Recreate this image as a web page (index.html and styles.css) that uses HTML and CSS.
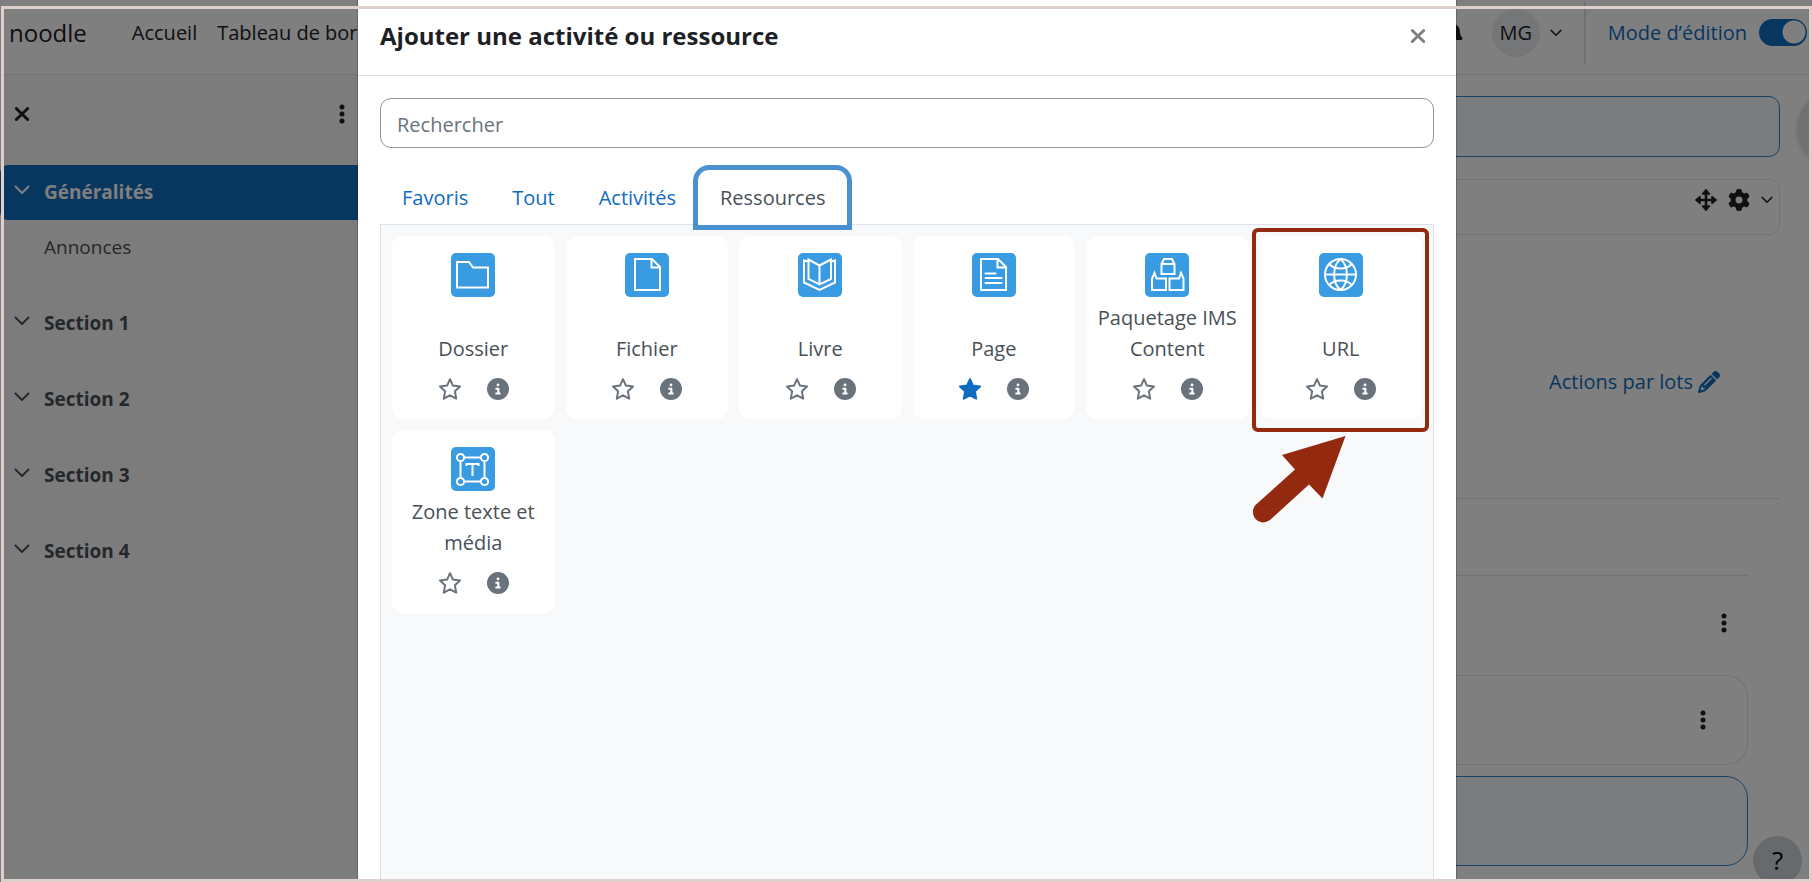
FILE: index.html
```html
<!DOCTYPE html>
<html lang="fr">
<head>
<meta charset="utf-8">
<meta name="viewport" content="width=device-width, initial-scale=1">
<title>noodle – Ajouter une activité ou ressource</title>
<link rel="stylesheet" href="styles.css">
</head>
<body>
<svg class="sprite" aria-hidden="true">
  <symbol id="i-chevron" viewBox="0 0 16 16"><path d="M1.5 4.5 8 11l6.500-6.500" fill="none" stroke="currentColor" stroke-width="2" stroke-linecap="round" stroke-linejoin="round"/></symbol>
  <symbol id="i-close" viewBox="0 0 16 16"><path d="M2.300 2.500 13.700 13.500M13.700 2.500 2.300 13.500" fill="none" stroke="currentColor" stroke-width="3" stroke-linecap="round"/></symbol>
  <symbol id="i-dots" viewBox="0 0 6 20"><circle cx="3" cy="3" r="2.500"/><circle cx="3" cy="10" r="2.500"/><circle cx="3" cy="17" r="2.500"/></symbol>
  <symbol id="i-star" viewBox="0 0 24 24"><path d="M12 2.200 14.900 8.600 22 9.500 16.900 14.300 18.200 21.700 12 18.300 5.800 21.700 7.100 14.300 2 9.500 9.100 8.600Z" stroke="currentColor" stroke-width="2" stroke-linejoin="round"/></symbol>
  <symbol id="i-info" viewBox="0 0 512 512"><path d="M256 512A256 256 0 1 0 256 0a256 256 0 1 0 0 512zM216 336l24 0 0-64-24 0c-13.300 0-24-10.700-24-24s10.700-24 24-24l48 0c13.300 0 24 10.700 24 24l0 88 8 0c13.300 0 24 10.700 24 24s-10.700 24-24 24l-80 0c-13.300 0-24-10.700-24-24s10.700-24 24-24zm40-208a32 32 0 1 1 0 64 32 32 0 1 1 0-64z"/></symbol>
</svg>

<div class="page">
  <header class="navbar">
    <a class="brand" href="#">noodle</a>
    <nav class="primary-nav" aria-label="Navigation principale">
      <a href="#">Accueil</a>
      <a href="#">Tableau de bord</a>
    </nav>
    <div class="user-tools">
      <button class="plain" type="button" aria-label="Notifications">
        <svg class="ico-22" viewBox="0 0 448 512" fill="currentColor"><path d="M224 0c-17.700 0-32 14.300-32 32v19C119 66 64 131 64 208v19c0 47-17 92-48 127l-8 9c-8 9-10 23-5 34s16 19 29 19h384c13 0 24-7 29-19s3-25-5-34l-8-9c-31-35-48-80-48-127v-19c0-77-55-142-128-157V32c0-17.700-14.300-32-32-32zm45 493c12-12 19-28 19-45H160c0 17 7 33 19 45s28 19 45 19 33-7 45-19z"/></svg>
      </button>
      <button class="plain user-menu" type="button">
        <span class="avatar">MG</span>
        <svg class="ico-12"><use href="#i-chevron"/></svg>
      </button>
      <label class="edit-mode" for="edit-switch">Mode d’édition
        <input class="switch" id="edit-switch" type="checkbox" role="switch" checked>
      </label>
    </div>
  </header>

  <div class="columns">
    <aside class="drawer" aria-label="Index du cours">
      <div class="drawer-head">
        <button class="plain" type="button" aria-label="Fermer l’index"><svg class="ico-16"><use href="#i-close"/></svg></button>
        <button class="plain" type="button" aria-label="Options"><svg class="ico-dots"><use href="#i-dots"/></svg></button>
      </div>
      <div class="section">
        <a class="row row-active" href="#"><svg class="ico-16"><use href="#i-chevron"/></svg>Généralités</a>
        <a class="row row-child" href="#">Annonces</a>
      </div>
      <div class="section"><a class="row" href="#"><svg class="ico-16"><use href="#i-chevron"/></svg>Section 1</a></div>
      <div class="section"><a class="row" href="#"><svg class="ico-16"><use href="#i-chevron"/></svg>Section 2</a></div>
      <div class="section"><a class="row" href="#"><svg class="ico-16"><use href="#i-chevron"/></svg>Section 3</a></div>
      <div class="section"><a class="row" href="#"><svg class="ico-16"><use href="#i-chevron"/></svg>Section 4</a></div>
    </aside>

    <main class="content">
      <div class="add-block"></div>
      <div class="block">
        <button class="plain" type="button" aria-label="Déplacer">
          <svg class="ico-22" viewBox="0 0 22 22"><path d="M11 3v16M3 11h16" stroke="currentColor" stroke-width="2.600"/><path d="M11 .8 14.500 5h-7ZM11 21.200 7.500 17h7ZM.8 11 5 7.500v7ZM21.200 11 17 14.500v-7Z" stroke="currentColor" stroke-width="1.500" stroke-linejoin="round"/></svg>
        </button>
        <button class="plain block-menu" type="button" aria-label="Réglages">
          <svg class="ico-22" viewBox="0 0 512 512" fill="currentColor"><path d="M495.900 166.600c3.200 8.700 .5 18.400-6.400 24.600l-43.300 39.400c1.100 8.300 1.700 16.800 1.700 25.400s-.6 17.100-1.700 25.400l43.300 39.400c6.900 6.200 9.600 15.900 6.400 24.600c-4.400 11.900-9.700 23.300-15.800 34.300l-4.700 8.100c-6.600 11-14 21.400-22.100 31.200c-5.900 7.200-15.700 9.600-24.500 6.800l-55.700-17.700c-13.400 10.300-28.200 18.900-44 25.400l-12.500 57.100c-2 9.100-9 16.300-18.200 17.800c-13.800 2.300-28 3.500-42.500 3.500s-28.700-1.200-42.500-3.500c-9.200-1.500-16.200-8.700-18.200-17.800l-12.500-57.100c-15.800-6.500-30.600-15.100-44-25.400L83.100 425.900c-8.800 2.800-18.600 .3-24.500-6.800c-8.100-9.800-15.500-20.200-22.100-31.200l-4.700-8.100c-6.100-11-11.400-22.400-15.800-34.300c-3.200-8.700-.5-18.400 6.400-24.600l43.300-39.400C64.600 273.100 64 264.600 64 256s.6-17.100 1.700-25.400L22.400 191.200c-6.900-6.200-9.600-15.900-6.400-24.600c4.400-11.900 9.700-23.300 15.800-34.300l4.700-8.100c6.600-11 14-21.400 22.100-31.200c5.900-7.200 15.700-9.600 24.500-6.800l55.700 17.700c13.400-10.300 28.200-18.900 44-25.400l12.500-57.100c2-9.100 9-16.300 18.200-17.800C227.300 1.200 241.500 0 256 0s28.700 1.200 42.500 3.500c9.200 1.500 16.200 8.700 18.200 17.800l12.500 57.100c15.800 6.500 30.600 15.100 44 25.400l55.700-17.700c8.800-2.800 18.600-.3 24.500 6.800c8.100 9.800 15.500 20.200 22.100 31.200l4.700 8.100c6.100 11 11.400 22.400 15.800 34.300zM256 336a80 80 0 1 0 0-160 80 80 0 1 0 0 160z"/></svg>
          <svg class="ico-12"><use href="#i-chevron"/></svg>
        </button>
      </div>
      <div class="bulk">
        <button class="plain bulk-button" type="button">Actions par lots
          <svg class="ico-22" viewBox="0 0 512 512" fill="currentColor"><path d="M410.300 231l11.300-11.300-33.900-33.900-62.100-62.100L291.700 89.800l-11.300 11.300-22.600 22.600L58.600 322.900c-10.400 10.400-18 23.300-22.200 37.400L1 480.700c-2.500 8.400-.2 17.500 6.100 23.700s15.300 8.500 23.700 6.100l120.300-35.400c14.100-4.200 27-11.800 37.400-22.200L387.700 253.700 410.300 231zM160 399.400l-9.100 22.700c-4 3.100-8.500 5.400-13.300 6.900L59.400 452l23-78.100c1.400-4.900 3.800-9.400 6.900-13.300l22.700-9.100 0 32c0 8.800 7.200 16 16 16l32 0zM362.700 18.700L348.300 33.200 325.700 55.800 314.300 67.100l33.900 33.900 62.100 62.100 33.900 33.900 11.300-11.300 22.600-22.600 14.500-14.500c25-25 25-65.500 0-90.500L453.300 18.700c-25-25-65.500-25-90.500 0zm-47.400 168l-144 144c-6.200 6.200-16.400 6.200-22.600 0s-6.200-16.400 0-22.600l144-144c6.200-6.200 16.400-6.200 22.600 0s6.200 16.400 0 22.600z"/></svg>
        </button>
      </div>
      <div class="course">
        <div class="course-tabs"></div>
        <div class="course-section">
          <button class="plain" type="button" aria-label="Modifier la section"><svg class="ico-dots"><use href="#i-dots"/></svg></button>
        </div>
        <div class="activity">
          <button class="plain" type="button" aria-label="Modifier l’activité"><svg class="ico-dots"><use href="#i-dots"/></svg></button>
        </div>
        <div class="activity activity-add"></div>
      </div>
    </main>
  </div>
  <button class="drawer-toggle" type="button" aria-label="Ouvrir le tiroir des blocs"></button>
  <button class="help" type="button" aria-label="Aide">?</button>
</div>

<div class="backdrop">
  <div class="modal" role="dialog" aria-modal="true" aria-labelledby="modal-title">
    <div class="modal-head">
      <h2 id="modal-title">Ajouter une activité ou ressource</h2>
      <button class="plain modal-close" type="button" aria-label="Fermer"><svg class="ico-16"><use href="#i-close"/></svg></button>
    </div>
    <div class="modal-body">
      <input class="search" type="search" placeholder="Rechercher" aria-label="Rechercher">
      <div class="tabs" role="tablist">
        <button class="tab" type="button" role="tab">Favoris</button>
        <button class="tab" type="button" role="tab">Tout</button>
        <button class="tab" type="button" role="tab">Activités</button>
        <button class="tab tab-active" type="button" role="tab" aria-selected="true">Ressources</button>
      </div>
      <div class="chooser" role="tabpanel">
        <article class="card">
          <svg class="tile" viewBox="0 0 44 44"><path d="M6 34.500V9h12l4 5.500h15v20Z"/></svg>
          <a class="name" href="#">Dossier</a>
          <div class="tools"><button class="plain" type="button" aria-label="Ajouter Dossier aux favoris"><svg class="ico-24"><use href="#i-star"/></svg></button><button class="plain" type="button" aria-label="Aide Dossier"><svg class="ico-22"><use href="#i-info"/></svg></button></div>
        </article>
        <article class="card">
          <svg class="tile" viewBox="0 0 44 44"><path d="M10 6h17l8 8v23H10ZM26.500 6v8.500H35"/></svg>
          <a class="name" href="#">Fichier</a>
          <div class="tools"><button class="plain" type="button" aria-label="Ajouter Fichier aux favoris"><svg class="ico-24"><use href="#i-star"/></svg></button><button class="plain" type="button" aria-label="Aide Fichier"><svg class="ico-22"><use href="#i-info"/></svg></button></div>
        </article>
        <article class="card">
          <svg class="tile" viewBox="0 0 44 44"><path d="M21.500 12.500V31M21.500 12.500 10.500 6.500V26l11 5.500L33 26V6.500ZM10.500 8.500 6 7.500V29.500L21.500 37 37 29.500V7.500l-4 1"/></svg>
          <a class="name" href="#">Livre</a>
          <div class="tools"><button class="plain" type="button" aria-label="Ajouter Livre aux favoris"><svg class="ico-24"><use href="#i-star"/></svg></button><button class="plain" type="button" aria-label="Aide Livre"><svg class="ico-22"><use href="#i-info"/></svg></button></div>
        </article>
        <article class="card">
          <svg class="tile" viewBox="0 0 44 44"><path d="M9 6h17l8 8v23H9ZM25.500 6v8.500H34M13.500 20.500h10M13.500 25h16M13.500 30h16" stroke-linecap="round"/></svg>
          <a class="name" href="#">Page</a>
          <div class="tools"><button class="plain starred" type="button" aria-label="Retirer Page des favoris"><svg class="ico-24"><use href="#i-star"/></svg></button><button class="plain" type="button" aria-label="Aide Page"><svg class="ico-22"><use href="#i-info"/></svg></button></div>
        </article>
        <article class="card">
          <svg class="tile" viewBox="0 0 44 44"><path d="M16.500 21V11L19 6h8l2.500 5v10ZM16.500 11h13M7 37V25.500L9.500 20l2 5.500H21V37ZM24.500 37V25.500H34l2-5.500 2.500 5.500V37Z"/></svg>
          <a class="name" href="#">Paquetage IMS Content</a>
          <div class="tools"><button class="plain" type="button" aria-label="Ajouter Paquetage IMS aux favoris"><svg class="ico-24"><use href="#i-star"/></svg></button><button class="plain" type="button" aria-label="Aide Paquetage IMS"><svg class="ico-22"><use href="#i-info"/></svg></button></div>
        </article>
        <article class="card card-marked">
          <svg class="tile" viewBox="0 0 44 44"><circle cx="21.500" cy="21.500" r="15.500"/><path d="M6 21.500h31M21.500 6c-8.500 7-8.500 24 0 31M21.500 6c8.500 7 8.500 24 0 31M10 11c6 6 17 6 23 0M10 32c6-6 17-6 23 0"/></svg>
          <a class="name" href="#">URL</a>
          <div class="tools"><button class="plain" type="button" aria-label="Ajouter URL aux favoris"><svg class="ico-24"><use href="#i-star"/></svg></button><button class="plain" type="button" aria-label="Aide URL"><svg class="ico-22"><use href="#i-info"/></svg></button></div>
          <svg class="arrow" viewBox="0 0 93 88" aria-hidden="true"><path d="M92.500 0 69.500 62.500 56 48.500 17 84C5 92-5 78 2.500 69L42 33.500 29 19Z"/></svg>
        </article>
        <article class="card">
          <svg class="tile" viewBox="0 0 44 44"><path d="M9.500 10.500h24v24h-24Z"/><path d="M15.500 19v-2h12v2M21.500 17v12"/><g fill="#399be2"><circle cx="9.500" cy="10.500" r="3.600"/><circle cx="33.500" cy="10.500" r="3.600"/><circle cx="9.500" cy="34.500" r="3.600"/><circle cx="33.500" cy="34.500" r="3.600"/></g></svg>
          <a class="name" href="#">Zone texte et média</a>
          <div class="tools"><button class="plain" type="button" aria-label="Ajouter Zone texte et média aux favoris"><svg class="ico-24"><use href="#i-star"/></svg></button><button class="plain" type="button" aria-label="Aide Zone texte et média"><svg class="ico-22"><use href="#i-info"/></svg></button></div>
        </article>
      </div>
    </div>
  </div>
</div>
<div class="frame" aria-hidden="true"></div>
</body>
</html>
```

FILE: styles.css
```css
* { box-sizing: border-box; }

body {
  margin: 0;
  font-family: "Open Sans", "Noto Sans", sans-serif;
  font-size: 20px;
  line-height: 31px;
  color: #1d2125;
  background: #fff;
}

a { color: inherit; text-decoration: none; }
svg { display: block; fill: currentColor; flex: none; }
.sprite { position: absolute; width: 0; height: 0; }

.plain {
  display: flex;
  align-items: center;
  margin: 0;
  padding: 0;
  border: 0;
  background: none;
  color: inherit;
  font: inherit;
}

.ico-12 { width: 12px; height: 12px; }
.ico-16 { width: 16px; height: 16px; }
.ico-22 { width: 22px; height: 22px; }
.ico-24 { width: 24px; height: 24px; }
.ico-dots { width: 6px; height: 20px; }

/* Course page */
.page {
  position: relative;
  display: flex;
  flex-direction: column;
  height: 100vh;
  overflow: hidden;
}

.navbar {
  display: flex;
  align-items: center;
  flex: none;
  padding: 1px 5px 10px 9px;
  border-bottom: 1px solid #dee2e6;
}
.brand { font-size: 24px; }
.primary-nav { display: flex; gap: 20px; margin-left: 45px; }
.user-tools { display: flex; align-items: center; margin-left: auto; }
.user-menu { gap: 10px; margin: 0 22px 0 28px; }
.avatar {
  display: flex;
  align-items: center;
  justify-content: center;
  width: 48px;
  height: 48px;
  border-radius: 50%;
  background: #e9ecef;
}
.edit-mode {
  display: flex;
  align-items: center;
  gap: 12px;
  min-height: 63px;
  padding-left: 22px;
  border-left: 2px solid #dee2e6;
  color: #0f6cbf;
}
.switch {
  appearance: none;
  width: 48px;
  height: 27px;
  margin: 0;
  border-radius: 14px;
  background: radial-gradient(circle at 35px 13px, #fff 11px, #0f6cbf 12px);
}

.columns { display: flex; flex: 1; min-height: 0; }

.drawer { flex: none; width: 358px; background: #f8f9fa; font-size: 19px; }
.drawer-head {
  display: flex;
  align-items: center;
  justify-content: space-between;
  padding: 29px 13px 41px 14px;
}
.section { margin-bottom: 21px; }
.row {
  display: flex;
  align-items: center;
  gap: 14px;
  padding: 12px 14px;
  border-radius: 8px;
  color: #495057;
  font-weight: 700;
}
.row svg { margin-bottom: 6px; }
.row-active { border-radius: 8px 0 0 8px; background: #0f6cbf; color: #fff; }
.row-child { padding-left: 44px; font-weight: 400; }

.content { flex: 1; padding: 21px 32px 0; }
.add-block {
  height: 61px;
  border: 1px solid #3584cd;
  border-radius: 11px;
  background: #f5f9fc;
}
.block {
  display: flex;
  align-items: flex-start;
  justify-content: flex-end;
  gap: 11px;
  height: 56px;
  margin-top: 22px;
  padding: 9px 6px;
  border: 1px solid #dee2e6;
  border-radius: 11px;
}
.block-menu { gap: 11px; }
.bulk {
  display: flex;
  justify-content: flex-end;
  padding: 131px 60px 101px 0;
  border-bottom: 1px solid #dee2e6;
}
.bulk-button { gap: 5px; color: #0f6cbf; }
.course { margin-right: 32px; }
.course-tabs { height: 77px; border-bottom: 1px solid #dee2e6; }
.course-section {
  display: flex;
  justify-content: flex-end;
  padding: 37px 21px 42px;
}
.activity {
  display: flex;
  align-items: center;
  justify-content: flex-end;
  height: 90px;
  margin-bottom: 11px;
  padding-right: 41px;
  border: 1px solid #dee2e6;
  border-radius: 22px;
}
.activity-add { border-color: #3584cd; background: #f5f9fc; }

.drawer-toggle {
  position: absolute;
  top: 91px;
  right: -59px;
  width: 74px;
  height: 74px;
  border: 0;
  border-radius: 50%;
  background: #dee2e6;
  box-shadow: 0 3px 6px rgba(0, 0, 0, .15);
}
.help {
  position: absolute;
  right: 10px;
  bottom: -3px;
  width: 49px;
  height: 49px;
  padding: 0;
  border: 0;
  border-radius: 50%;
  background: #ced4da;
  color: #000;
  font: 500 26px/49px "Open Sans", sans-serif;
}

/* Activity chooser */
.backdrop {
  position: fixed;
  inset: 0;
  display: flex;
  justify-content: center;
  padding-left: 2px;
  overflow: hidden;
  background: rgba(0, 0, 0, .5);
}
.modal {
  display: flex;
  flex-direction: column;
  width: 100%;
  max-width: 1100px;
  border: 1px solid rgba(0, 0, 0, .2);
  border-width: 0 1px;
  background: #fff;
  background-clip: padding-box;
}
.modal-head {
  display: flex;
  align-items: center;
  justify-content: space-between;
  padding: 20px 30px 24px 22px;
  border-bottom: 1px solid #dee2e6;
}
.modal-head h2 { margin: 0; font-size: 24px; font-weight: 700; line-height: 31px; }
.modal-close { color: #808080; }
.modal-body {
  display: flex;
  flex-direction: column;
  flex: 1;
  padding: 22px 22px 0;
}
.search {
  width: 100%;
  height: 50px;
  padding: 2px 16px 0;
  border: 1px solid #8f959e;
  border-radius: 11px;
  font: inherit;
  outline: 0;
}
.search::placeholder { color: #6a737b; opacity: 1; }

.tabs { display: flex; margin: 22px 0 -1px; }
.tab {
  padding: 12px 22px;
  border: 0;
  border-radius: 11px 11px 0 0;
  background: #fff;
  color: #0f6cbf;
  font: inherit;
}
.tab-active {
  z-index: 1;
  color: #495057;
  box-shadow: 0 0 0 5px rgba(15, 108, 191, .75);
}

.chooser {
  display: grid;
  grid-template-columns: repeat(6, minmax(0, 1fr));
  align-content: start;
  gap: 11px;
  flex: 1;
  padding: 11px;
  border: 1px solid #dee2e6;
  border-bottom: 0;
  background: #f8f9fa;
}
.card {
  position: relative;
  display: flex;
  flex-direction: column;
  align-items: center;
  padding: 17px 6px 18px;
  border-radius: 11px;
  background: #fff;
  color: #495057;
}
.tile {
  width: 44px;
  height: 44px;
  border-radius: 5px;
  background: #399be2;
  fill: none;
  stroke: #fff;
  stroke-width: 2;
}
.name {
  display: flex;
  align-items: flex-end;
  justify-content: center;
  min-height: 62px;
  margin: 5px 0 13px;
  text-align: center;
}
.tools { display: flex; align-items: center; gap: 25px; color: #6a737b; }
.tools svg { fill: currentColor; }
.tools .ico-24 { fill: none; }
.tools .starred { color: #0f6cbf; }
.tools .starred .ico-24 { fill: currentColor; }

/* Tutorial marker around the URL card */
.card-marked::after {
  content: "";
  position: absolute;
  inset: -8px -7px -13px -8px;
  border: 4px solid #93290f;
  border-radius: 6px;
  pointer-events: none;
}
.arrow {
  position: absolute;
  top: 200px;
  left: -7px;
  width: 93px;
  height: 88px;
  fill: #93290f;
}

.frame {
  position: fixed;
  inset: 6px 0 0 1px;
  border: 3px solid #ddd0cc;
  pointer-events: none;
}
```
